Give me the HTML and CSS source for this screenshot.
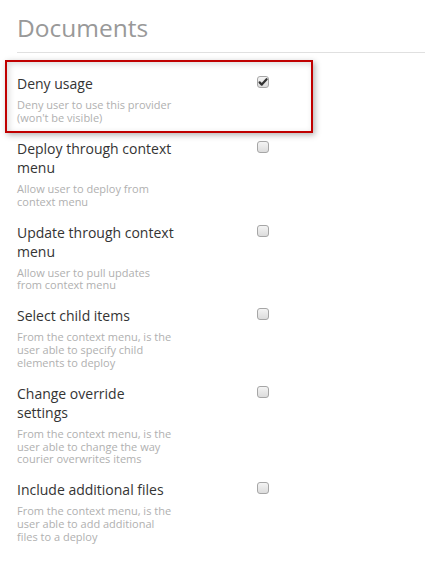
FILE: index.html
```html
<!DOCTYPE html>
<html lang="en">

<head>
  <meta charset="UTF-8" />
  <meta name="viewport" content="width=device-width, initial-scale=1" />
  <title>Documents</title>
  <link rel="stylesheet" href="styles.css">
</head>

<body>
  <div class="panel">
    <h1>Documents</h1>

    <div class="settings">
      <div class="setting is-marked">
        <div class="info">
          <div class="label">Deny usage</div>
          <div class="desc">Deny user to use this provider (won't be visible)</div>
        </div>
        <span class="check is-checked">
          <svg viewBox="0 0 12 12" width="12" height="12"><path d="M2.6 6.4 L4.8 8.6 L9.6 3.2" fill="none" stroke="#333" stroke-width="2.2" stroke-linecap="round" stroke-linejoin="round"/></svg>
        </span>
        <div class="highlight"></div>
      </div>

      <div class="setting">
        <div class="info">
          <div class="label">Deploy through context menu</div>
          <div class="desc">Allow user to deploy from context menu</div>
        </div>
        <span class="check"></span>
      </div>

      <div class="setting">
        <div class="info">
          <div class="label">Update through context menu</div>
          <div class="desc">Allow user to pull updates from context menu</div>
        </div>
        <span class="check"></span>
      </div>

      <div class="setting">
        <div class="info">
          <div class="label">Select child items</div>
          <div class="desc">From the context menu, is the user able to specify child elements to deploy</div>
        </div>
        <span class="check"></span>
      </div>

      <div class="setting">
        <div class="info">
          <div class="label">Change override settings</div>
          <div class="desc">From the context menu, is the user able to change the way courier overwrites items</div>
        </div>
        <span class="check"></span>
      </div>

      <div class="setting">
        <div class="info">
          <div class="label">Include additional files</div>
          <div class="desc">From the context menu, is the user able to add additional files to a deploy</div>
        </div>
        <span class="check"></span>
      </div>
    </div>
  </div>
</body>

</html>
```

FILE: styles.css
```css
* {
  margin: 0;
  padding: 0;
  box-sizing: border-box;
}

body {
  font-family: 'Open Sans', 'Liberation Sans', sans-serif;
  background: #fff;
  color: #343434;
}

.panel {
  padding: 15px 0 0 17px;
}

h1 {
  font-size: 24.5px;
  font-weight: normal;
  line-height: 26px;
  color: #999;
  padding-bottom: 11px;
  border-bottom: 1px solid #e0e0e0;
}

.settings {
  padding-top: 21px;
}

.setting {
  position: relative;
  display: flex;
  align-items: flex-start;
  margin-bottom: 14.4px;
}

.info {
  width: 240px;
  padding-right: 78px;
}

.label {
  font-size: 14px;
  line-height: 19px;
  margin-bottom: 6px;
  color: #343434;
}

.desc {
  width: 157px;
  font-size: 11px;
  line-height: 12.7px;
  color: #b0b0b0;
}

.check {
  display: block;
  width: 12px;
  height: 12px;
  margin-top: 2px;
  border: 1px solid #a6a6a6;
  border-radius: 3px;
  background: linear-gradient(#f4f4f4, #dcdcdc);
}

.check svg {
  display: block;
  margin: -1px;
}

/* annotation frame around the first setting */
.highlight {
  position: absolute;
  left: -12px;
  top: -14px;
  width: 308px;
  height: 73px;
  border: 2px solid #c00000;
  box-shadow: 2px 2px 6px rgba(0, 0, 0, 0.3), inset 2px 2px 6px rgba(0, 0, 0, 0.15);
  pointer-events: none;
}
```
